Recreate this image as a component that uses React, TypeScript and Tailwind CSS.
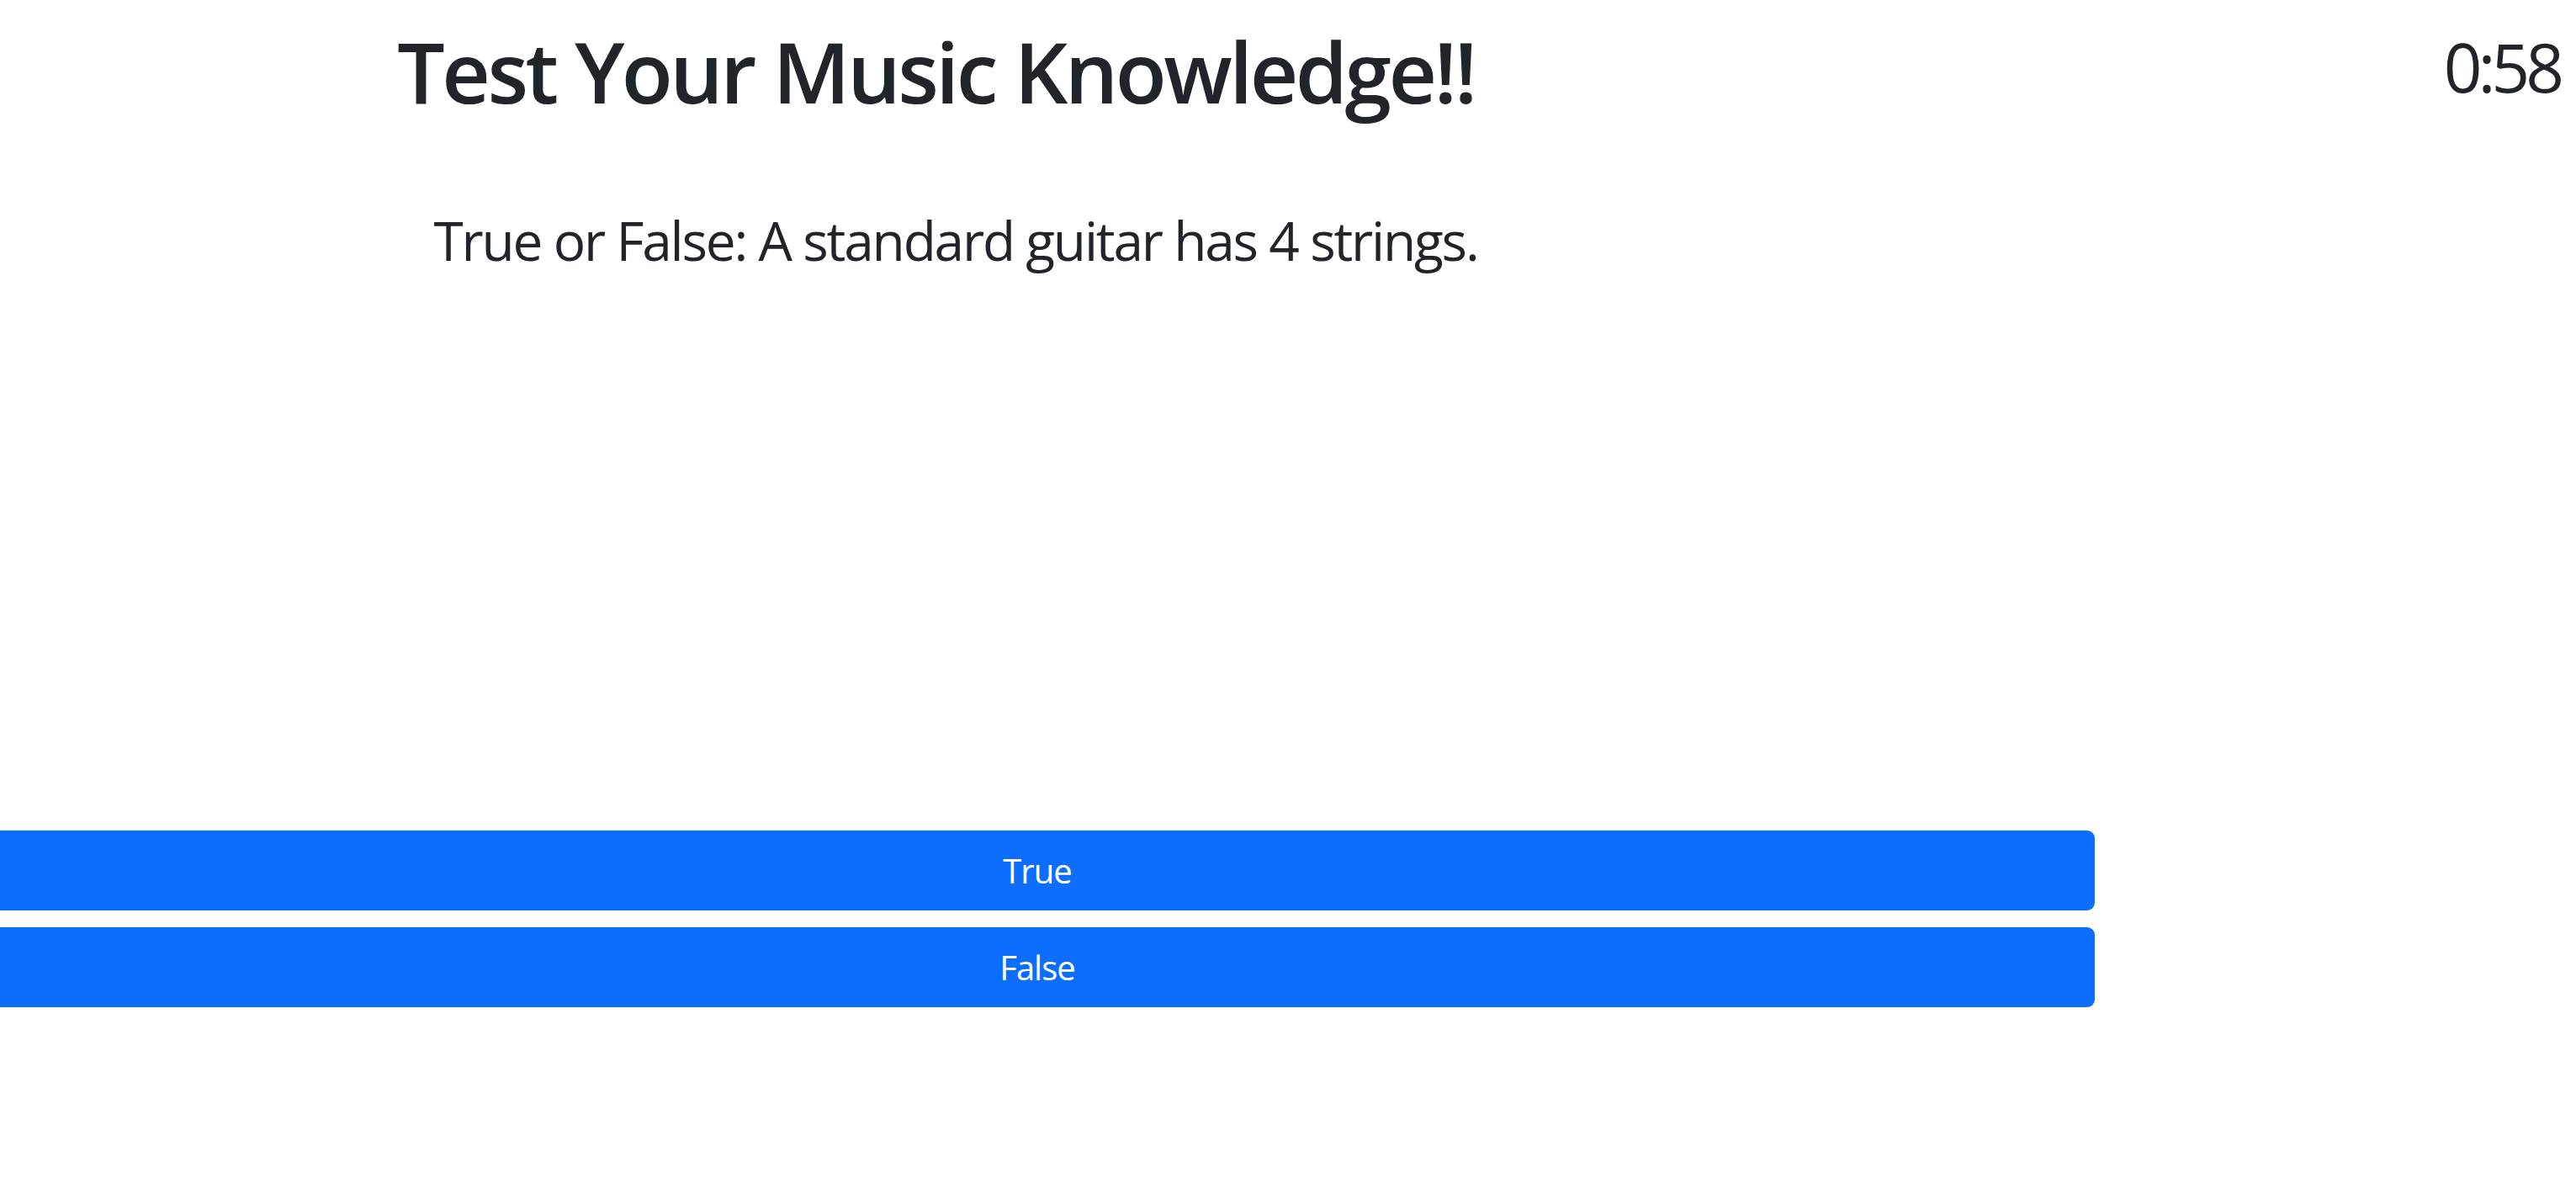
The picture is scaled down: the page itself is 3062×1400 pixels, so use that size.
export default function App() {
  return (
    <div className="min-h-screen bg-white font-['Open_Sans',sans-serif] text-[#212529]">
      {/* Header: title + timer */}
      <div className="flex items-start">
        <div className="w-[2225px] pt-[24px] text-center">
          <h1 className="text-[100px] font-semibold leading-[1.2] tracking-[-3.5px]">Test Your Music Knowledge!!</h1>
        </div>
        <div className="flex-1 pt-[31px] pr-[19px] text-right text-[80px] leading-[1.2] tracking-[-5px]">0:58</div>
      </div>

      {/* Question */}
      <div className="mt-[94px] w-[2272px] text-center">
        <p className="text-[64px] leading-[1.5] tracking-[-2.2px]">True or False: A standard guitar has 4 strings.</p>
      </div>

      {/* Answers */}
      <div className="mt-[653px] -ml-[24px] flex w-[2514px] flex-col gap-[20px]">
        <button className="h-[95px] w-full rounded-[9px] bg-[#0d6efd] text-[40px] text-white tracking-[-1px]">True</button>
        <button className="h-[95px] w-full rounded-[9px] bg-[#0d6efd] text-[40px] text-white tracking-[-1px]">False</button>
      </div>
    </div>
  );
}
